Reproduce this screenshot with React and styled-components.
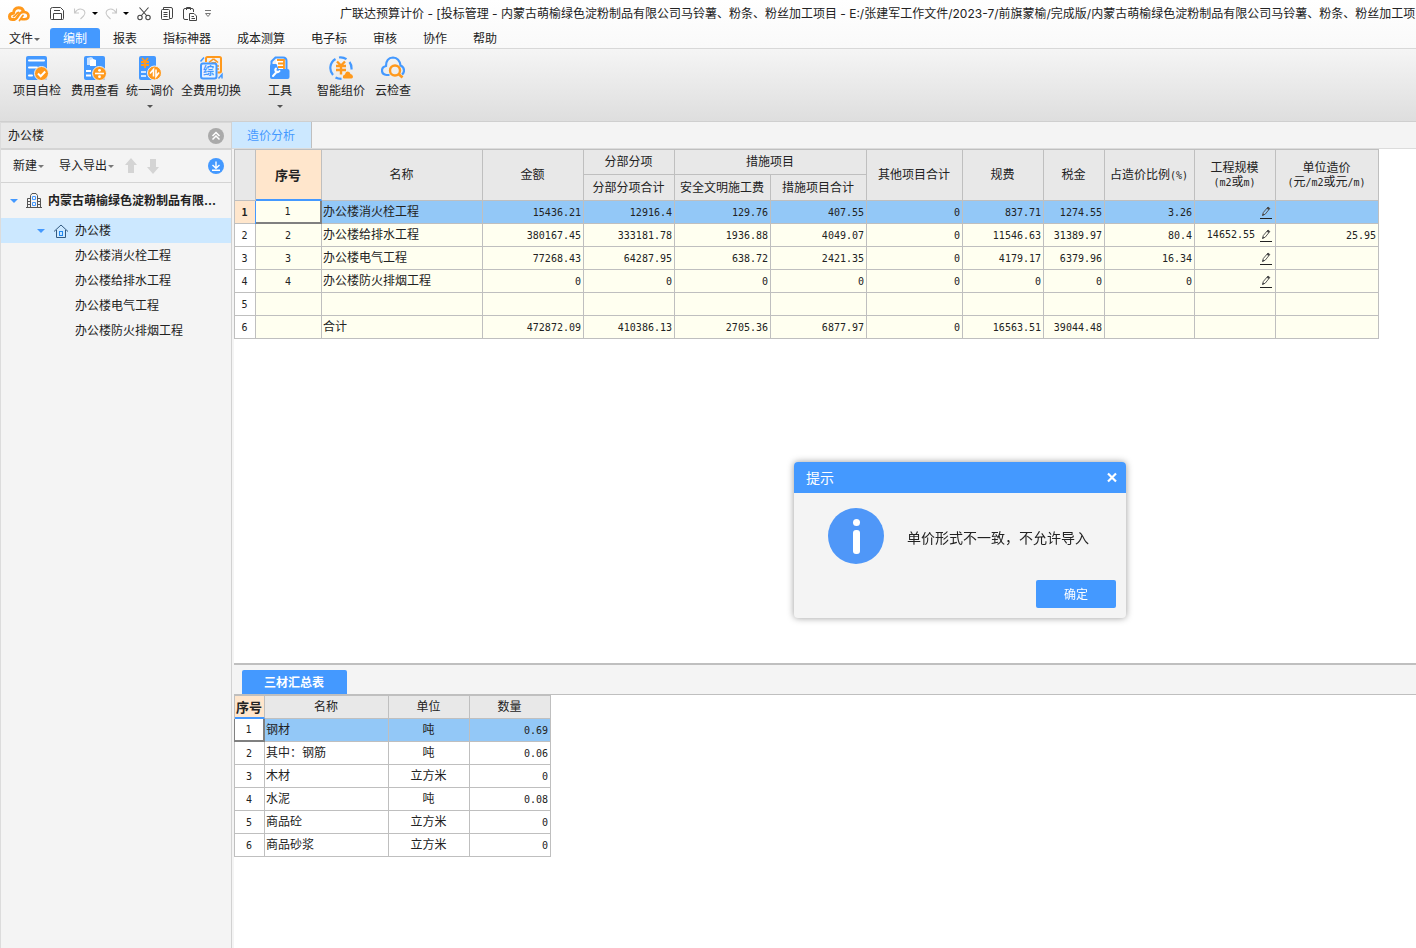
import React, { useState } from "react";
import styled, { createGlobalStyle } from "styled-components";

const GlobalStyle = createGlobalStyle`
  * {
    box-sizing: border-box;
  }
  body {
    margin: 0;
    background: #f4f4f4;
    color: #222;
    font: 12px/16px Inter, "Noto Sans CJK SC", sans-serif;
  }
  button {
    border: 0;
    padding: 0;
    background: none;
    color: inherit;
    font: inherit;
    cursor: pointer;
  }
`;

const Page = styled.div`
  min-height: 100vh;
  display: flex;
  flex-direction: column;
  overflow: hidden;
`;

/* ---------- top ---------- */

const Top = styled.header`
  background: linear-gradient(#ffffff, #f0f0f0);
`;

const TitleBar = styled.div`
  height: 27px;
  display: flex;
  align-items: center;
`;

const QuickTools = styled.div`
  width: 340px;
  flex: none;
  display: flex;
  align-items: center;
  padding-left: 7px;
`;

const QuickButton = styled.button`
  width: ${(props) => props.$w || 16}px;
  height: 16px;
  margin-left: ${(props) => props.$gap || 0}px;
  display: flex;
  align-items: center;
  justify-content: center;
  color: ${(props) => (props.$off ? "#c8c8c8" : "#444")};
`;

const WindowTitle = styled.div`
  flex: 1;
  min-width: 0;
  overflow: hidden;
  white-space: nowrap;
`;

const Menu = styled.nav`
  height: 22px;
  display: flex;
  align-items: stretch;
  padding-top: 1px;
  border-bottom: 1px solid #d8d8d8;
`;

const FileButton = styled.button`
  width: 50px;
  padding: 2px 0 0 9px;
  display: flex;
  align-items: center;
  gap: 1px;
`;

const MenuItem = styled.button`
  padding: 2px 13px 0;
  border-radius: 3px 3px 0 0;
  background: ${(props) => (props.$active ? "#4499ff" : "transparent")};
  color: ${(props) => (props.$active ? "#fff" : "#222")};
`;

const Ribbon = styled.div`
  height: 73px;
  display: flex;
  align-items: flex-start;
  padding: 7px 0 0 8px;
  background: linear-gradient(#f5f5f5, #dedede);
  border-bottom: 1px solid #cfcfcf;
`;

const RibbonButton = styled.button`
  padding: 0 5px;
  margin-left: ${(props) => props.$gap || 0}px;
  display: flex;
  flex-direction: column;
  align-items: center;
  gap: 3px;
`;

const Caret = styled.span`
  width: 0;
  height: 0;
  margin-top: ${(props) => props.$top || 0}px;
  border: 3px solid transparent;
  border-top-color: ${(props) => props.$color || "#555"};
  border-bottom: 0;
`;

/* ---------- sidebar ---------- */

const Body = styled.div`
  flex: 1;
  display: flex;
`;

const Sidebar = styled.aside`
  width: 232px;
  flex: none;
  border-left: 1px solid #dcdcdc;
  border-right: 1px solid #d2d2d2;
`;

const SideHead = styled.div`
  height: 28px;
  padding: 0 7px;
  display: flex;
  align-items: center;
  justify-content: space-between;
  background: #e8e8e8;
  border-top: 1px solid #d8d8d8;
  border-bottom: 2px solid #d4d4d4;
`;

const SideTools = styled.div`
  height: 33px;
  padding: 0 7px 0 12px;
  display: flex;
  align-items: center;
  border-bottom: 1px solid #d4d4d4;
`;

const SideButton = styled.button`
  display: flex;
  align-items: center;
  gap: 1px;
  margin-right: ${(props) => props.$right || 0}px;
`;

const RoundButton = styled.button`
  width: 16px;
  height: 16px;
  display: flex;
  align-items: center;
  justify-content: center;
  margin-left: auto;
  border-radius: 50%;
  background: ${(props) => props.$bg};
`;

const Tree = styled.ul`
  list-style: none;
  margin: 0;
  padding: 0;
`;

const TreeRow = styled.li`
  height: ${(props) => (props.$root ? 35 : 25)}px;
  padding-left: ${(props) => props.$indent}px;
  display: flex;
  align-items: center;
  font-weight: ${(props) => (props.$root ? 700 : 400)};
  background: ${(props) => (props.$selected ? "#cce8ff" : "transparent")};
  cursor: pointer;
`;

const TreeCaret = styled.span`
  width: 0;
  height: 0;
  border: 4px solid transparent;
  border-top-color: #4499ff;
  border-bottom: 0;
`;

const TreeIcon = styled.span`
  width: 16px;
  height: 16px;
  margin: 0 6px 0 8px;
`;

/* ---------- main area ---------- */

const Main = styled.main`
  flex: 1;
  min-width: 0;
  display: flex;
  flex-direction: column;
`;

const TabBar = styled.div`
  height: 27px;
  display: flex;
  border-bottom: 1px solid #dcdcdc;
`;

const Tab = styled.button`
  padding: 1px 16px 0 15px;
  background: #cce8ff;
  color: #4499ff;
  border-right: 1px solid #bfbfbf;
`;

const Sheet = styled.section`
  flex: ${(props) => (props.$grow ? 1 : "none")};
  height: ${(props) => (props.$grow ? "auto" : "253px")};
  margin-left: 2px;
  background: #fff;
  overflow: hidden;
`;

const BottomBar = styled.div`
  height: 32px;
  margin-left: 2px;
  padding: 5px 8px 0;
  display: flex;
  border-top: 2px solid #bfbfbf;
  border-bottom: 1px solid #bfbfbf;
`;

const BottomTab = styled.button`
  padding: 1px 23px 0 22px;
  border-radius: 2px 2px 0 0;
  background: #4499ff;
  color: #fff;
  font-weight: 700;
`;

const Table = styled.table`
  width: ${(props) => props.$width}px;
  table-layout: fixed;
  border-collapse: separate;
  border-spacing: 0;
  border-left: 1px solid #bfbfbf;
  border-top: 1px solid #bfbfbf;
`;

const HeadCell = styled.th`
  height: ${(props) => props.$h || 25}px;
  padding: 0 1px 0 0;
  font-weight: ${(props) => (props.$marked ? 700 : 400)};
  font-size: ${(props) => (props.$marked ? 13 : 12)}px;
  line-height: 14px;
  white-space: nowrap;
  background: ${(props) => (props.$marked ? "#ffe6cc" : "#e8e8e8")};
  border-right: 1px solid #bfbfbf;
  border-bottom: ${(props) =>
    props.$marked ? "2px solid #4499ff" : "1px solid #bfbfbf"};
`;

const Cell = styled.td`
  height: 23px;
  padding: 0 2px 0 1px;
  line-height: 16px;
  white-space: nowrap;
  text-align: ${(props) => props.$align || "left"};
  background: ${(props) =>
    props.$selected ? "#93c8f7" : props.$plain ? "#fff" : "#fffff0"};
  border-right: 1px solid #bfbfbf;
  border-bottom: 1px solid #bfbfbf;
`;

const FocusCell = styled(Cell)`
  position: relative;
  border-right: 2px solid #808080;
  border-bottom: 2px solid #808080;
  box-shadow: ${(props) => (props.$plain ? "-1px 0 #808080" : "-1px 0 #4499ff")};
`;

const RowHead = styled.th`
  height: 23px;
  padding: 1px 1px 0 0;
  font-family: "DejaVu Sans Mono", monospace;
  font-size: 10px;
  line-height: 14px;
  font-weight: ${(props) => (props.$marked ? 700 : 400)};
  background: ${(props) => (props.$marked ? "#ffe6cc" : "#fff")};
  border-right: 1px solid #bfbfbf;
  border-bottom: 1px solid #bfbfbf;
`;

const Num = styled.span`
  font-family: "DejaVu Sans Mono", monospace;
  font-size: 10px;
`;

const ScaleBox = styled.div`
  display: flex;
  align-items: center;
  justify-content: flex-end;
  gap: 5px;
  padding-right: 1px;
`;

const EditButton = styled.button`
  width: 12px;
  height: 13px;
  display: flex;
  justify-content: center;
  border-bottom: 1px solid #222;
`;

/* ---------- message box ---------- */

const MessageBox = styled.div`
  position: fixed;
  left: 794px;
  top: 462px;
  width: 332px;
  border-radius: 4px;
  overflow: hidden;
  background: #f4f4f4;
  box-shadow: 0 0 7px rgba(0, 0, 0, 0.4);
`;

const MessageHead = styled.div`
  height: 31px;
  padding: 0 8px 0 12px;
  display: flex;
  align-items: center;
  justify-content: space-between;
  background: #4499ff;
  color: #fff;
  font-size: 14px;
  line-height: 20px;
`;

const CloseButton = styled.button`
  width: 12px;
  height: 12px;
  display: flex;
`;

const MessageBody = styled.div`
  display: flex;
  align-items: center;
  gap: 23px;
  padding: 15px 34px 16px;
  font-size: 14px;
`;

const MessageText = styled.p`
  margin: 0;
  padding-top: 4px;
`;

const MessageFoot = styled.div`
  display: flex;
  justify-content: flex-end;
  padding: 0 10px 10px;
`;

const OkButton = styled.button`
  width: 80px;
  height: 28px;
  padding-top: 2px;
  border-radius: 2px;
  background: #4499ff;
  color: #fff;
`;

/* ---------- icons ---------- */

const Svg = ({ w = 16, h = 16, children }) => (
  <svg width={w} height={h} viewBox={`0 0 ${w} ${h}`} fill="none" aria-hidden="true">
    {children}
  </svg>
);

const Logo = () => (
  <Svg w={24} h={18}>
    <path
      d="M7 14.500H5.500C3.300 14.500 2.500 13 2.500 11.500C2.500 9.500 4 8.200 6.500 8.200C6.500 5 8.500 2.800 11.500 2.800C14 2.800 15.800 4 16.500 6.200"
      stroke="#ff991c" strokeWidth="3" strokeLinecap="round" strokeLinejoin="round"
    />
    <path
      d="M7 14.500C11.500 14.500 10.500 7 16.500 7C19.500 7 21.500 8.700 21.500 10.800C21.500 13 19.800 14.300 17.500 14.300H15"
      stroke="#ff991c" strokeWidth="2.600" strokeLinecap="round" strokeLinejoin="round"
    />
    <path d="M6.500 11.500C8.500 11.500 9 8 11.500 7.500M12.500 15.500L16 10.500" stroke="#ff991c" strokeWidth="1.800" strokeLinecap="round" />
  </Svg>
);

const SaveIcon = () => (
  <Svg>
    <path d="M3.500 1.500H11.500L14.500 4.500V12.500Q14.500 13.500 13.500 13.500H2.500Q1.500 13.500 1.500 12.500V3.500Q1.500 1.500 3.500 1.500ZM4.500 13V7.500H12.500V13M5 4.500H11" stroke="currentColor" />
  </Svg>
);

const UndoIcon = () => (
  <Svg>
    <path d="M2.500 2.500V7H7M3 6.500C5 3.500 8 2.500 10.500 3.500C13.500 4.500 13.500 8 11.500 10L8.500 13" stroke="currentColor" strokeWidth="1.100" />
  </Svg>
);

const RedoIcon = () => (
  <Svg>
    <path d="M13.500 2.500V7H9M13 6.500C11 3.500 8 2.500 5.500 3.500C2.500 4.500 2.500 8 4.500 10L7.500 13" stroke="currentColor" strokeWidth="1.100" />
  </Svg>
);

const CutIcon = () => (
  <Svg>
    <path d="M3.500 1.500L11 10M12.500 1.500L5 10" stroke="currentColor" strokeWidth="1.100" />
    <circle cx="4" cy="11.500" r="2.200" stroke="currentColor" strokeWidth="1.100" />
    <circle cx="12" cy="11.500" r="2.200" stroke="currentColor" strokeWidth="1.100" />
  </Svg>
);

const CopyIcon = () => (
  <Svg>
    <path d="M4.500 3V1.500H12Q13.500 1.500 13.500 3V11.500Q13.500 12.500 12 12.500H11" stroke="currentColor" />
    <rect x="2.500" y="3.500" width="8" height="10" rx="1" stroke="currentColor" />
    <path d="M4.500 6.500H8.500M4.500 8.500H8.500M4.500 10.500H8.500" stroke="currentColor" />
  </Svg>
);

const PasteIcon = () => (
  <Svg>
    <path d="M6 13.500H3Q1.500 13.500 1.500 12V4Q1.500 2.500 3 2.500H10Q11.500 2.500 11.500 4V6M4.500 4V1.500H8.500V4" stroke="currentColor" />
    <path d="M7.500 7.500H12L14.500 10V14.500H7.500ZM9.500 10.500H12M9.500 12.500H13" stroke="currentColor" />
  </Svg>
);

const MoreIcon = () => (
  <Svg w={8} h={10}>
    <path d="M1 1.500H7M1.500 4.500L4 7.500L6.500 4.500Z" stroke="#777" />
  </Svg>
);

const SelfCheckIcon = () => (
  <Svg w={24} h={24}>
    <rect x="1" y="0" width="21" height="24" rx="2" fill="#4499ff" />
    <path d="M4 4.500H19M4 11.500H12M4 19.500H7" stroke="#fff" strokeWidth="2" strokeLinecap="round" />
    <circle cx="16.500" cy="17.500" r="7" fill="#ff991c" stroke="#f0f0f0" />
    <path d="M13 17.500L15.700 20.200L20.200 15.500" stroke="#fff" strokeWidth="2" />
  </Svg>
);

const FeeIcon = () => (
  <Svg w={24} h={24}>
    <rect x="1" y="0" width="21" height="24" rx="2" fill="#4499ff" />
    <path d="M4 2L8 1L10 2V9H4Z" fill="#cce3ff" />
    <path d="M7 4L10 3L13 4V10H7Z" fill="#fff" />
    <path d="M3 15H8M3 19.500H8" stroke="#fff" strokeWidth="2" />
    <circle cx="16.500" cy="17.500" r="7" fill="#ff991c" stroke="#f0f0f0" />
    <path d="M12 17.500H21" stroke="#fff" strokeWidth="1.600" />
    <circle cx="16.500" cy="14.300" r="1.400" fill="#fff" />
    <circle cx="16.500" cy="20.700" r="1.400" fill="#fff" />
  </Svg>
);

const PriceIcon = () => (
  <Svg w={24} h={24}>
    <rect x="1" y="0" width="17" height="24" rx="2" fill="#4499ff" />
    <path d="M4 2L7 5.500L10 2M3 6H11M3 9H11M7 5.500V12" stroke="#ff991c" strokeWidth="1.800" />
    <path d="M3 16H8M3 20H8" stroke="#fff" strokeWidth="1.600" />
    <circle cx="16.500" cy="17" r="7" fill="#ff991c" stroke="#f0f0f0" />
    <path d="M15.500 20.500V13.500L12 17.500M18 13.500V20.500L21 16.500" stroke="#fff" strokeWidth="1.600" />
  </Svg>
);

const SwitchIcon = () => (
  <Svg w={24} h={24}>
    <path d="M7 6V2.500Q7 1 8.500 1H20.500Q22 1 22 2.500V15Q22 16.500 20.500 16.500H18.500" stroke="#ff991c" strokeWidth="2" />
    <path d="M14.500 2.800L10 6.500M14.500 2.800L19 6.500M12.500 6.700H17M18 10H20M18 13H20" stroke="#ff991c" strokeWidth="1.600" />
    <rect x="2" y="7.500" width="15.500" height="15" rx="2" fill="#e9f3ff" stroke="#4499ff" strokeWidth="2" />
    <text x="4" y="19" fontSize="11" fontWeight="700" fill="#4499ff">综</text>
    <path d="M1.500 5.500L5 1.500M19.500 22.500L23 18.500V22.500" stroke="#4499ff" strokeWidth="1.500" />
  </Svg>
);

const ToolIcon = () => (
  <Svg w={24} h={24}>
    <path d="M3.500 10V5.500L7.500 1.500H15Q18.500 1.500 18.500 5V14" stroke="#4499ff" strokeWidth="2" />
    <path d="M8 3.500H17V14H8Z" fill="#fff" />
    <path d="M9 4H16V13M10 7.500H16M10 11H16" stroke="#ff991c" strokeWidth="1.800" />
    <path d="M4 8H8.500L10.500 13H19.500Q21.500 13 21.500 15V21Q21.500 23 19.500 23H4Q2 23 2 21V10Q2 8 4 8Z" fill="#4499ff" />
    <path d="M5 20L9 15.500M8 12.500Q6.500 14 8 15.500Q10 17 11.500 15" stroke="#fff" strokeWidth="2" strokeLinecap="round" />
  </Svg>
);

const SmartIcon = () => (
  <Svg w={24} h={24}>
    <path d="M6.500 3A10.500 10.500 0 0 0 4 19M6.500 21.500Q9 22.800 12.500 22.800M10 1.500A10.500 10.500 0 0 1 17.500 3.200M20.500 6Q22.800 9 22.500 13.500" stroke="#4499ff" strokeWidth="2.200" />
    <path d="M8 5.500L12 9.500L16 5.500M7 10H17M7 14H17M12 9.500V18.500" stroke="#ff991c" strokeWidth="2.400" />
    <path d="M15 22.500Q13.500 22.500 14 20Q14.500 18.500 16 18.500Q16.500 15.500 18.800 15.500Q21 15.500 21.500 18Q23.500 18 24 20.500Q24 22.500 22.500 22.500Z" fill="#ff991c" />
  </Svg>
);

const CloudIcon = () => (
  <Svg w={24} h={24}>
    <path d="M8.500 19H5.500Q1 18.500 1 14.500Q1 11 5 10Q5 2 12 1.500Q18.500 2 19.500 9.500Q23 11 23 14.500Q23 17 21 18.500" stroke="#4499ff" strokeWidth="2.200" />
    <circle cx="14" cy="14.500" r="5" stroke="#ff991c" strokeWidth="2.400" />
    <path d="M17.500 18L21.500 21.500" stroke="#ff991c" strokeWidth="2.600" />
  </Svg>
);

const ArrowIcon = ({ down }) => (
  <Svg w={12} h={16}>
    <path d={down ? "M6 16L0 9H3V1H9V9H12Z" : "M6 0L12 7H9V15H3V7H0Z"} fill="#d4d4d4" />
  </Svg>
);

const BuildingIcon = () => (
  <Svg>
    <path d="M0 14.500H16M4.500 14V2.500L6 0.500H10L11.500 2.500V14M4.500 5.500H1.500V14M11.500 5.500H14.500V14M2 8.500H4M2 11.500H4M12 8.500H14M12 11.500H14" stroke="#555" />
    <path d="M6.500 3.500H9.500V6.500H6.500ZM6.500 9.500H9.500V12.500H6.500Z" stroke="#4499ff" />
  </Svg>
);

const HomeIcon = () => (
  <Svg>
    <path d="M1 8.500L8 2L15 8.500M3.500 7V14.500H12.500V7" stroke="#335a80" />
    <rect x="6.500" y="8.500" width="3" height="4" stroke="#2288ee" />
  </Svg>
);

const PencilIcon = () => (
  <Svg w={10} h={11}>
    <path d="M1.500 9.500L2.300 6.500L7 1L8.800 2.500L4.200 8.200Z" stroke="#555" />
    <path d="M5.800 2.500L7.500 4L8.800 2.500L7 1ZM1.300 9.800L2 7.500L3.500 8.800Z" fill="#444" />
  </Svg>
);

/* ---------- data ---------- */

const menuItems = ["编制", "报表", "指标神器", "成本测算", "电子标", "审核", "协作", "帮助"];

const ribbonItems = [
  { label: "项目自检", icon: <SelfCheckIcon /> },
  { label: "费用查看", icon: <FeeIcon /> },
  { label: "统一调价", icon: <PriceIcon />, drop: true, gap: -3 },
  { label: "全费用切换", icon: <SwitchIcon />, gap: -3 },
  { label: "工具", icon: <ToolIcon />, drop: true, gap: 17 },
  { label: "智能组价", icon: <SmartIcon />, gap: 15 },
  { label: "云检查", icon: <CloudIcon /> },
];

const treeItems = ["办公楼消火栓工程", "办公楼给排水工程", "办公楼电气工程", "办公楼防火排烟工程"];

const costWidths = [21, 66, 161, 101, 91, 96, 96, 96, 81, 61, 90, 81, 103];

const costRows = [
  { no: "1", name: "办公楼消火栓工程", nums: ["15436.21", "12916.4", "129.76", "407.55", "0", "837.71", "1274.55", "3.26"], edit: true },
  { no: "2", name: "办公楼给排水工程", nums: ["380167.45", "333181.78", "1936.88", "4049.07", "0", "11546.63", "31389.97", "80.4"], edit: true, scale: "14652.55", unit: "25.95" },
  { no: "3", name: "办公楼电气工程", nums: ["77268.43", "64287.95", "638.72", "2421.35", "0", "4179.17", "6379.96", "16.34"], edit: true },
  { no: "4", name: "办公楼防火排烟工程", nums: ["0", "0", "0", "0", "0", "0", "0", "0"], edit: true },
  { no: "", name: "", nums: ["", "", "", "", "", "", "", ""] },
  { no: "", name: "合计", nums: ["472872.09", "410386.13", "2705.36", "6877.97", "0", "16563.51", "39044.48", ""] },
];

const materialWidths = [30, 124, 81, 81];

const materialRows = [
  ["钢材", "吨", "0.69"],
  ["其中：钢筋", "吨", "0.06"],
  ["木材", "立方米", "0"],
  ["水泥", "吨", "0.08"],
  ["商品砼", "立方米", "0"],
  ["商品砂浆", "立方米", "0"],
];

const sum = (list) => list.reduce((a, b) => a + b, 1);

const Columns = ({ widths }) => (
  <colgroup>
    {widths.map((width, i) => (
      <col key={i} style={{ width }} />
    ))}
  </colgroup>
);

/* ---------- tables ---------- */

const CostTable = () => (
  <Table $width={sum(costWidths)}>
    <Columns widths={costWidths} />
    <thead>
      <tr>
        <HeadCell rowSpan={2} />
        <HeadCell rowSpan={2} $marked>序号</HeadCell>
        <HeadCell rowSpan={2}>名称</HeadCell>
        <HeadCell rowSpan={2}>金额</HeadCell>
        <HeadCell>分部分项</HeadCell>
        <HeadCell colSpan={2}>措施项目</HeadCell>
        <HeadCell rowSpan={2}>其他项目合计</HeadCell>
        <HeadCell rowSpan={2}>规费</HeadCell>
        <HeadCell rowSpan={2}>税金</HeadCell>
        <HeadCell rowSpan={2}>占造价比例<Num>(%)</Num></HeadCell>
        <HeadCell rowSpan={2}>
          工程规模<br /><Num>(m2</Num>或<Num>m)</Num>
        </HeadCell>
        <HeadCell rowSpan={2}>
          单位造价<br /><Num>(</Num>元<Num>/m2</Num>或元<Num>/m)</Num>
        </HeadCell>
      </tr>
      <tr>
        <HeadCell $h={26}>分部分项合计</HeadCell>
        <HeadCell $h={26}>安全文明施工费</HeadCell>
        <HeadCell $h={26}>措施项目合计</HeadCell>
      </tr>
    </thead>
    <tbody>
      {costRows.map((row, i) => {
        const selected = i === 0;
        const First = selected ? FocusCell : Cell;
        return (
          <tr key={i}>
            <RowHead $marked={selected}>{i + 1}</RowHead>
            <First $align="center"><Num>{row.no}</Num></First>
            <Cell $selected={selected}>{row.name}</Cell>
            {row.nums.map((num, n) => (
              <Cell key={n} $align="right" $selected={selected}><Num>{num}</Num></Cell>
            ))}
            <Cell $align="right" $selected={selected}>
              {row.edit && (
                <ScaleBox>
                  <Num>{row.scale}</Num>
                  <EditButton aria-label="编辑"><PencilIcon /></EditButton>
                </ScaleBox>
              )}
            </Cell>
            <Cell $align="right" $selected={selected}><Num>{row.unit}</Num></Cell>
          </tr>
        );
      })}
    </tbody>
  </Table>
);

const MaterialTable = () => (
  <Table $width={sum(materialWidths)}>
    <Columns widths={materialWidths} />
    <thead>
      <tr>
        <HeadCell $h={23} $marked>序号</HeadCell>
        <HeadCell $h={23}>名称</HeadCell>
        <HeadCell $h={23}>单位</HeadCell>
        <HeadCell $h={23}>数量</HeadCell>
      </tr>
    </thead>
    <tbody>
      {materialRows.map(([name, unit, amount], i) => {
        const selected = i === 0;
        const First = selected ? FocusCell : Cell;
        return (
          <tr key={name}>
            <First $plain $align="center"><Num>{i + 1}</Num></First>
            <Cell $plain $selected={selected}>{name}</Cell>
            <Cell $plain $selected={selected} $align="center">{unit}</Cell>
            <Cell $plain $selected={selected} $align="right"><Num>{amount}</Num></Cell>
          </tr>
        );
      })}
    </tbody>
  </Table>
);

const App = () => {
  const [active, setActive] = useState("编制");
  const [open, setOpen] = useState(true);

  return (
    <Page>
      <GlobalStyle />
      <Top>
        <TitleBar>
          <QuickTools>
            <Logo />
            <QuickButton $gap={18} aria-label="保存"><SaveIcon /></QuickButton>
            <QuickButton $gap={7} $off aria-label="撤销"><UndoIcon /></QuickButton>
            <QuickButton $w={7} $gap={3} aria-label="撤销列表"><Caret $color="#000" /></QuickButton>
            <QuickButton $gap={5} $off aria-label="恢复"><RedoIcon /></QuickButton>
            <QuickButton $w={7} $gap={3} aria-label="恢复列表"><Caret $color="#000" /></QuickButton>
            <QuickButton $gap={7} aria-label="剪切"><CutIcon /></QuickButton>
            <QuickButton $gap={7} aria-label="复制"><CopyIcon /></QuickButton>
            <QuickButton $gap={7} aria-label="粘贴"><PasteIcon /></QuickButton>
            <QuickButton $w={8} $gap={6} aria-label="更多"><MoreIcon /></QuickButton>
          </QuickTools>
          <WindowTitle>
            广联达预算计价 - [投标管理 - 内蒙古萌榆绿色淀粉制品有限公司马铃薯、粉条、粉丝加工项目 - E:/张建军工作文件/2023-7/前旗蒙榆/完成版/内蒙古萌榆绿色淀粉制品有限公司马铃薯、粉条、粉丝加工项
          </WindowTitle>
        </TitleBar>
        <Menu>
          <FileButton>文件<Caret $color="#666" /></FileButton>
          {menuItems.map((item) => (
            <MenuItem key={item} $active={item === active} onClick={() => setActive(item)}>
              {item}
            </MenuItem>
          ))}
        </Menu>
        <Ribbon>
          {ribbonItems.map((item) => (
            <RibbonButton key={item.label} $gap={item.gap}>
              {item.icon}
              {item.label}
              {item.drop && <Caret $top={3} />}
            </RibbonButton>
          ))}
        </Ribbon>
      </Top>

      <Body>
        <Sidebar>
          <SideHead>
            办公楼
            <RoundButton $bg="#aaa" aria-label="收起">
              <Svg w={10} h={10}>
                <path d="M1.500 5L5 1.500L8.500 5M1.500 8.500L5 5L8.500 8.500" stroke="#fff" strokeWidth="1.500" />
              </Svg>
            </RoundButton>
          </SideHead>
          <SideTools>
            <SideButton $right={15}>新建<Caret $color="#777" /></SideButton>
            <SideButton $right={11}>导入导出<Caret $color="#777" /></SideButton>
            <SideButton $right={10} aria-label="上移"><ArrowIcon /></SideButton>
            <SideButton aria-label="下移"><ArrowIcon down /></SideButton>
            <RoundButton $bg="#4499ff" aria-label="下载">
              <Svg w={10} h={10}>
                <path d="M5 0.500V7M1.500 4L5 7.300L8.500 4M1 9.300H9" stroke="#fff" strokeWidth="1.400" />
              </Svg>
            </RoundButton>
          </SideTools>
          <Tree>
            <TreeRow $root $indent={9}>
              <TreeCaret />
              <TreeIcon><BuildingIcon /></TreeIcon>
              内蒙古萌榆绿色淀粉制品有限...
            </TreeRow>
            <TreeRow $selected $indent={36}>
              <TreeCaret />
              <TreeIcon><HomeIcon /></TreeIcon>
              办公楼
            </TreeRow>
            {treeItems.map((item) => (
              <TreeRow key={item} $indent={74}>{item}</TreeRow>
            ))}
          </Tree>
        </Sidebar>

        <Main>
          <TabBar>
            <Tab>造价分析</Tab>
          </TabBar>
          <Sheet $grow>
            <CostTable />
          </Sheet>
          <BottomBar>
            <BottomTab>三材汇总表</BottomTab>
          </BottomBar>
          <Sheet>
            <MaterialTable />
          </Sheet>
        </Main>
      </Body>

      {open && (
        <MessageBox role="dialog" aria-label="提示">
          <MessageHead>
            提示
            <CloseButton aria-label="关闭" onClick={() => setOpen(false)}>
              <Svg w={12} h={12}>
                <path d="M2 1.500L10 9.500M10 1.500L2 9.500" stroke="#fff" strokeWidth="2.200" />
              </Svg>
            </CloseButton>
          </MessageHead>
          <MessageBody>
            <Svg w={56} h={56}>
              <circle cx="28" cy="28" r="28" fill="#4f97f8" />
              <circle cx="28.500" cy="14.500" r="3.500" fill="#fff" />
              <rect x="25" y="22" width="7" height="24" rx="3" fill="#fff" />
            </Svg>
            <MessageText>单价形式不一致，不允许导入</MessageText>
          </MessageBody>
          <MessageFoot>
            <OkButton onClick={() => setOpen(false)}>确定</OkButton>
          </MessageFoot>
        </MessageBox>
      )}
    </Page>
  );
};

export default App;
